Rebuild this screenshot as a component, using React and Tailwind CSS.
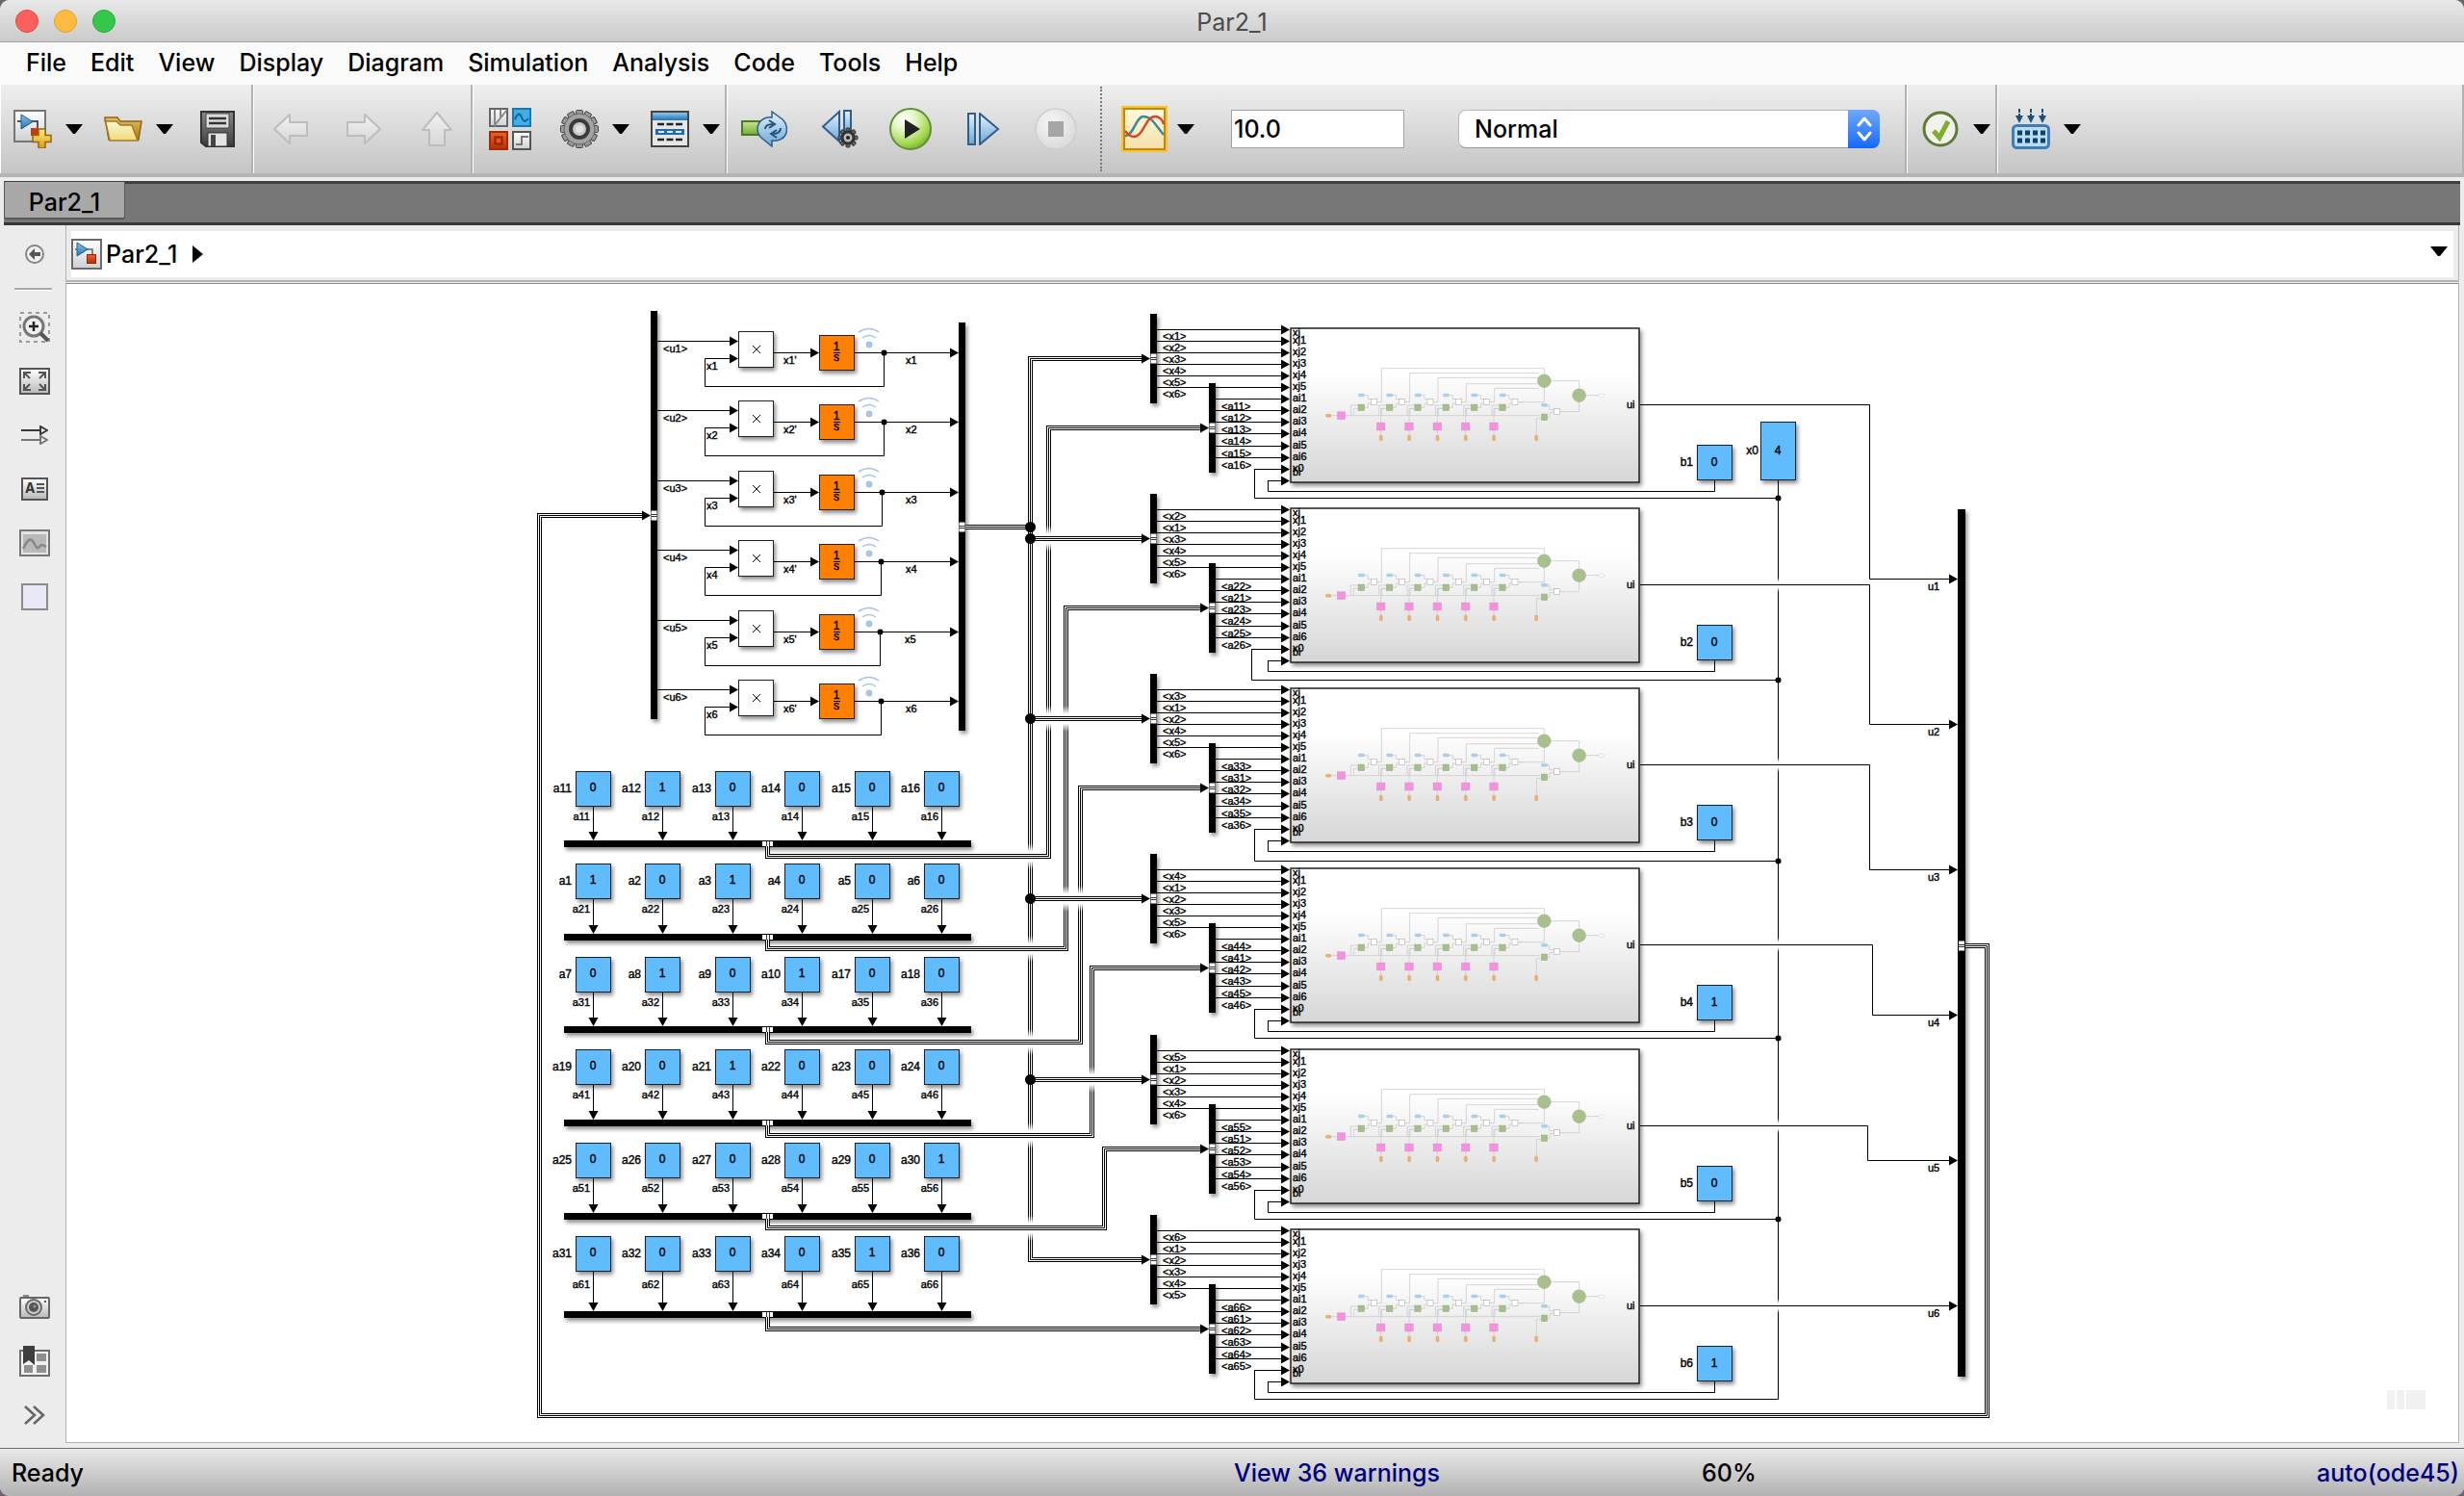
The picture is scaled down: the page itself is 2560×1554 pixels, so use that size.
import React from "react";

/* ---------- shared gradients ---------- */

function Grad({ id, from, to, horizontal = false }) {
  return (
    <linearGradient id={id} x1="0" y1="0" x2={horizontal ? "1" : "0"} y2={horizontal ? "0" : "1"}>
      <stop offset="0" stopColor={from} />
      <stop offset="1" stopColor={to} />
    </linearGradient>
  );
}

function SharedDefs() {
  return (
    <svg className="absolute size-0" aria-hidden="true">
      <defs>
        <Grad id="paper" from="#ffffff" to="#cdd0d4" />
        <Grad id="blue" from="#8fc4ea" to="#2272b4" />
        <Grad id="paleblue" from="#e4f2fc" to="#6ba6d6" />
        <Grad id="gold" from="#fff08a" to="#d99a0c" />
        <Grad id="folderBack" from="#e8c05a" to="#a9761f" />
        <Grad id="folderFront" from="#fffbe0" to="#f0d978" />
        <Grad id="steel" from="#8a8a8a" to="#3c3c3c" />
        <Grad id="ghost" from="#f2f2f2" to="#d6d6d6" />
        <Grad id="red" from="#f0602a" to="#b92d05" />
        <Grad id="green" from="#c8e69a" to="#6fae2e" />
        <Grad id="scopeBg" from="#fffbe2" to="#f3dfa4" />
        <Grad id="sidePaper" from="#ffffff" to="#b9b9b9" />
        <linearGradient id="subsystem" x1="0" y1="0" x2="0" y2="1">
          <stop offset="0" stopColor="#ffffff" />
          <stop offset="0.28" stopColor="#ffffff" />
          <stop offset="1" stopColor="#d6d6d6" />
        </linearGradient>
        <linearGradient id="cross" x1="0" y1="0" x2="0" y2="1">
          <stop offset="0" stopColor="#fff" stopOpacity="0" />
          <stop offset="0.32" stopColor="#fff" />
          <stop offset="0.68" stopColor="#fff" />
          <stop offset="1" stopColor="#fff" stopOpacity="0" />
        </linearGradient>
        <radialGradient id="playFill" cx="0.35" cy="0.25" r="0.85">
          <stop offset="0" stopColor="#ffffff" />
          <stop offset="0.35" stopColor="#e2f4bf" />
          <stop offset="0.75" stopColor="#9fd64a" />
          <stop offset="1" stopColor="#57a51c" />
        </radialGradient>
        <radialGradient id="stopFill" cx="0.4" cy="0.35" r="0.7">
          <stop offset="0" stopColor="#f6f6f6" />
          <stop offset="1" stopColor="#d9d9d9" />
        </radialGradient>
      </defs>
    </svg>
  );
}

/* ---------- toolbar icons ---------- */

const NewIcon = () => (
  <svg width="40" height="40" viewBox="0 0 40 40">
    <rect x="1" y="1" width="32" height="32" fill="url(#paper)" stroke="#767676" strokeWidth="2" />
    <path d="M4 12h4M18 12h7v8" fill="none" stroke="#555" strokeWidth="2" />
    <path d="M8 5l12 7.500-12 7.500z" fill="url(#blue)" stroke="#1b588c" />
    <rect x="18" y="19" width="8" height="8" fill="#c63a10" />
    <path d="M26 20h7v6.500h6v7h-6V40h-7v-6.500h-6v-7h6z" fill="url(#gold)" stroke="#94660a" strokeWidth="1.500" />
  </svg>
);

const FolderIcon = () => (
  <svg width="40" height="28" viewBox="0 0 40 28">
    <path d="M1 2h13l3 4h22l-3 19H5z" fill="url(#folderBack)" stroke="#8f661b" strokeWidth="1.500" />
    <path d="M1 3l5 23h29L29 10H17l-4-4H1z" fill="url(#folderFront)" stroke="#a07b2a" strokeWidth="1.500" />
  </svg>
);

const SaveIcon = () => (
  <svg width="36" height="38" viewBox="0 0 36 38">
    <path d="M1 1h34v36H6l-5-4z" fill="url(#steel)" stroke="#333" strokeWidth="2" />
    <rect x="6" y="3" width="24" height="15" fill="#dcdcdc" stroke="#444" />
    <path d="M9 8h18M9 13h18" stroke="#333" strokeWidth="2.500" />
    <rect x="8" y="23" width="20" height="14" fill="#e4e4e4" stroke="#333" />
    <rect x="11" y="25" width="5" height="12" fill="#444" />
  </svg>
);

const GhostArrow = ({ d, w, h }) => (
  <svg width={w} height={h} viewBox={`0 0 ${w} ${h}`}>
    <path d={d} fill="url(#ghost)" stroke="#bdbdbd" strokeWidth="2" strokeLinejoin="round" />
  </svg>
);

const LibraryIcon = () => (
  <svg width="44" height="44" viewBox="0 0 44 44">
    <rect x="1" y="1" width="18" height="18" fill="url(#paper)" stroke="#666" strokeWidth="2" />
    <path d="M6 2v16L18 3M12 2v9" fill="none" stroke="#888" strokeWidth="2" />
    <rect x="25" y="1" width="18" height="18" fill="#41aee4" stroke="#1b78ad" strokeWidth="2" />
    <path d="M27 12c3-7 5-7 7-2s4 5 7 1" fill="none" stroke="#12639a" strokeWidth="2" />
    <rect x="1" y="25" width="18" height="18" fill="url(#red)" stroke="#a42b08" strokeWidth="2" />
    <rect x="6.500" y="30.500" width="7" height="7" fill="#e6531e" stroke="#8c2304" strokeWidth="2" />
    <rect x="25" y="25" width="18" height="18" fill="url(#paper)" stroke="#555" strokeWidth="2" />
    <path d="M28 38h6v-8h7" fill="none" stroke="#777" strokeWidth="2" />
  </svg>
);

function Teeth({ cx, cy, r, w, h, n, fill, stroke }) {
  return Array.from({ length: n }, (_, i) => (
    <rect
      key={i}
      x={cx - w / 2}
      y={cy - r}
      width={w}
      height={h}
      rx="1"
      fill={fill}
      stroke={stroke}
      transform={`rotate(${(360 / n) * i} ${cx} ${cy})`}
    />
  ));
}

const GearIcon = () => (
  <svg width="40" height="40" viewBox="0 0 40 40">
    <Teeth cx={20} cy={20} r={19.500} w={7} h={8} n={12} fill="#9a9a9a" stroke="#444" />
    <circle cx="20" cy="20" r="16" fill="#a3a3a3" stroke="#666" />
    <circle cx="20" cy="20" r="9" fill="#c9c9c9" stroke="#3a3a3a" strokeWidth="4" />
    <circle cx="20" cy="20" r="4" fill="#e2e2e2" />
  </svg>
);

const ExplorerIcon = () => (
  <svg width="40" height="38" viewBox="0 0 40 38">
    <rect x="1" y="1" width="38" height="36" fill="#e6e6e6" stroke="#444" strokeWidth="2" />
    <rect x="2" y="2" width="36" height="8" fill="url(#blue)" />
    <path d="M7 14h26M7 30h26" stroke="#222" strokeWidth="2.500" strokeDasharray="7 2.500" />
    <rect x="5" y="19" width="30" height="6" fill="#1f6db0" />
    <path d="M8 22h24" stroke="#d9ecfa" strokeWidth="2" strokeDasharray="6 3" />
  </svg>
);

const UpdateIcon = () => (
  <svg width="48" height="38" viewBox="0 0 48 38">
    <rect x="1" y="11" width="20" height="14" fill="url(#green)" stroke="#4a7c22" strokeWidth="2" />
    <path d="M17 19c0-8 7-13 15-12V1l11 8c4 4 5 9 4 14-2 6-8 9-15 8v6l-10-8c-4-3-5-6-5-10z" fill="url(#paleblue)" stroke="#2f5d8c" strokeWidth="1.500" />
    <path d="M25 19c0-4 3-5 8-5M29 10l6 4-6 4M41 18c0 4-3 6-8 6M37 28l-6-4 6-4" fill="none" stroke="#27527e" strokeWidth="2" />
  </svg>
);

const StepBackIcon = () => (
  <svg width="40" height="40" viewBox="0 0 40 40">
    <path d="M19 2v31L2 17.500z" fill="url(#paleblue)" stroke="#2f5d8c" strokeWidth="2" />
    <rect x="24" y="1" width="7" height="24" fill="url(#paleblue)" stroke="#2f5d8c" strokeWidth="2" />
    <Teeth cx={28} cy={29} r={10} w={4} h={5} n={8} fill="#666" stroke="#333" />
    <circle cx="28" cy="29" r="6" fill="#bbb" stroke="#333" strokeWidth="3" />
    <circle cx="28" cy="29" r="2" fill="#222" />
  </svg>
);

const PlayIcon = () => (
  <svg width="46" height="46" viewBox="0 0 46 46">
    <circle cx="23" cy="23" r="21" fill="url(#playFill)" stroke="#5f8f3a" strokeWidth="2" />
    <path d="M17 13v20l16-10z" fill="#222" />
  </svg>
);

const StepIcon = () => (
  <svg width="34" height="34" viewBox="0 0 34 34">
    <rect x="1" y="1" width="7" height="32" fill="url(#paleblue)" stroke="#2f5d8c" strokeWidth="2" />
    <path d="M13 1v32l19-16z" fill="url(#paleblue)" stroke="#2f5d8c" strokeWidth="2" />
  </svg>
);

const StopIcon = () => (
  <svg width="44" height="44" viewBox="0 0 44 44">
    <circle cx="22" cy="22" r="21" fill="url(#stopFill)" stroke="#cfcfcf" strokeWidth="1.500" />
    <rect x="14" y="14" width="16" height="16" fill="#a6a6a6" />
  </svg>
);

const ScopeIcon = () => (
  <svg width="48" height="48" viewBox="0 0 48 48">
    <rect x="1" y="1" width="46" height="46" fill="url(#scopeBg)" stroke="#f6c526" strokeWidth="2" />
    <rect x="3" y="3" width="42" height="42" fill="none" stroke="#c58414" strokeWidth="2" />
    <path d="M4 31c9 0 11-20 19-20 9 0 13 10 21 19" fill="none" stroke="#3e8a96" strokeWidth="2.500" />
    <path d="M4 26c3 4 5 6 9 6 10 0 12-21 22-21 4 0 8 3 9 8" fill="none" stroke="#d6452b" strokeWidth="2.500" />
  </svg>
);

const CheckIcon = () => (
  <svg width="38" height="38" viewBox="0 0 38 38">
    <circle cx="19" cy="19" r="17" fill="#f1f1ee" stroke="#5e7a35" strokeWidth="3" />
    <path d="M12 21l6 7L27 11" fill="none" stroke="#7fae2c" strokeWidth="5" />
  </svg>
);

const BuildIcon = () => (
  <svg width="40" height="42" viewBox="0 0 40 42">
    <path d="M8 0v8M20 0v8M32 0v8" stroke="#1c4f7c" strokeWidth="2" strokeDasharray="4 1" />
    <path d="M4 7h8l-4 8zM16 7h8l-4 8zM28 7h8l-4 8z" fill="#1c4f7c" />
    <rect x="1.500" y="17.500" width="37" height="23" rx="4" fill="#b8dcf8" stroke="#3f7db4" strokeWidth="3" />
    <path d="M6 25h29M6 33h29" stroke="#123f68" strokeWidth="5" strokeDasharray="5 3" />
  </svg>
);

const DownTriangle = () => (
  <svg width="18" height="11" viewBox="0 0 18 11">
    <path d="M0 0h18l-8 10H8z" fill="#000" />
  </svg>
);

function Tool({ label, className, children }) {
  return (
    <button type="button" aria-label={label} className={"shrink-0 flex items-center justify-center " + className}>
      {children}
    </button>
  );
}

function Menu({ label, className }) {
  return (
    <button type="button" aria-label={label} className={"shrink-0 w-[18px] h-10 flex items-center justify-center " + className}>
      <DownTriangle />
    </button>
  );
}

function Group({ className = "", children }) {
  return (
    <div className={"flex items-center h-full border-l border-r-2 border-l-white border-r-[#b2b2b2] " + className}>
      {children}
    </div>
  );
}

function Toolbar() {
  return (
    <div className="h-[98px] shrink-0 flex items-center border-t-2 border-t-[#fbfbfb] border-b-4 border-b-[#b4b4b4] bg-linear-to-b from-[#efefef] to-[#c5c5c5]" role="toolbar" aria-label="Model">
      <Group>
        <Tool label="New model" className="ml-[13px] w-10"><NewIcon /></Tool>
        <Menu label="New options" className="ml-[14px]" />
        <Tool label="Open" className="ml-[22px] w-10"><FolderIcon /></Tool>
        <Menu label="Open options" className="ml-[14px]" />
        <Tool label="Save" className="ml-7 mr-[17px] w-9"><SaveIcon /></Tool>
      </Group>
      <Group>
        <Tool label="Back" className="ml-[20px] w-9"><GhostArrow w={36} h={32} d="M1 16L17 1v8h18v14H17v8z" /></Tool>
        <Tool label="Forward" className="ml-10 w-9"><GhostArrow w={36} h={32} d="M35 16L19 1v8H1v14h18v8z" /></Tool>
        <Tool label="Up to parent" className="ml-[42px] mr-[19px] w-8"><GhostArrow w={32} h={36} d="M16 1l15 18h-7v16H8V19H1z" /></Tool>
      </Group>
      <Group>
        <Tool label="Library browser" className="ml-4 w-11"><LibraryIcon /></Tool>
        <Tool label="Model configuration" className="ml-[30px] w-10"><GearIcon /></Tool>
        <Menu label="Configuration options" className="ml-[14px]" />
        <Tool label="Model explorer" className="ml-[22px] w-10"><ExplorerIcon /></Tool>
        <Menu label="Explorer options" className="ml-[14px] mr-[5px]" />
      </Group>
      <Group className="w-[1226px]">
        <Tool label="Update diagram" className="ml-[14px] w-12"><UpdateIcon /></Tool>
        <Tool label="Step back" className="ml-[35px] w-10"><StepBackIcon /></Tool>
        <Tool label="Run" className="ml-[30px] w-[46px]"><PlayIcon /></Tool>
        <Tool label="Step forward" className="ml-9 w-[34px]"><StepIcon /></Tool>
        <Tool label="Stop" className="ml-9 w-11"><StopIcon /></Tool>
        <div className="ml-6 h-[88px] border-l-2 border-dotted border-[#777]" />
        <Tool label="Data inspector" className="ml-[20px] w-12"><ScopeIcon /></Tool>
        <Menu label="Inspector options" className="ml-[10px]" />
        <input
          aria-label="Simulation stop time"
          defaultValue="10.0"
          className="ml-[38px] w-[180px] h-10 shrink-0 bg-white border border-[#a2a2a2] pl-[2px] text-[25px] font-medium leading-8 text-black outline-none"
        />
        <div className="relative ml-14 w-[438px] h-10 shrink-0">
          <select
            aria-label="Simulation mode"
            defaultValue="Normal"
            className="appearance-none w-full h-full rounded-lg bg-white border border-[#b8b8b8] border-b-[#999] pl-4 text-[25px] font-medium leading-8 text-black outline-none"
          >
            <option>Normal</option>
            <option>Accelerator</option>
            <option>Rapid Accelerator</option>
          </select>
          <div className="pointer-events-none absolute right-0 top-0 h-10 w-[33px] rounded-r-lg bg-linear-to-b from-[#6ea8fa] to-[#1268fb] flex items-center justify-center">
            <svg width="18" height="26" viewBox="0 0 18 26">
              <path d="M3 9l6-7 6 7M3 17l6 7 6-7" fill="none" stroke="#fff" strokeWidth="3" strokeLinecap="round" strokeLinejoin="round" />
            </svg>
          </div>
        </div>
      </Group>
      <Group>
        <Tool label="Model advisor" className="ml-[15px] w-[38px]"><CheckIcon /></Tool>
        <Menu label="Advisor options" className="ml-[15px] mr-[5px]" />
      </Group>
      <Group className="flex-1">
        <Tool label="Build model" className="ml-[14px] w-10"><BuildIcon /></Tool>
        <Menu label="Build options" className="ml-[14px]" />
      </Group>
    </div>
  );
}

/* ---------- palette icons ---------- */

const PALETTE_TOP = [
  ["Zoom in", (
    <svg key="i" width="32" height="32" viewBox="0 0 32 32">
      <rect x="1" y="1" width="30" height="30" fill="none" stroke="#9a9a9a" strokeWidth="2" strokeDasharray="4 4" />
      <circle cx="15" cy="15" r="10" fill="#f0f0f0" stroke="#777" strokeWidth="3" />
      <path d="M15 10v10M10 15h10" stroke="#222" strokeWidth="2.500" />
      <path d="M22 22l8 8" stroke="#555" strokeWidth="4" />
    </svg>
  )],
  ["Fit to view", (
    <svg key="i" width="32" height="28" viewBox="0 0 32 28">
      <rect x="1" y="1" width="30" height="26" fill="url(#sidePaper)" stroke="#555" strokeWidth="2" />
      <path d="M5 11V5h7M20 5h7v6M27 17v6h-7M12 23H5v-6M5 5l6 6M27 5l-6 6M27 23l-6-6M5 23l6-6" fill="none" stroke="#555" strokeWidth="2" />
    </svg>
  )],
  ["Sample time", (
    <svg key="i" width="28" height="20" viewBox="0 0 28 20">
      <path d="M0 5h20" stroke="#3a3a3a" strokeWidth="2" />
      <path d="M20 1v8l7-4z" fill="#eee" stroke="#3a3a3a" strokeWidth="2" />
      <path d="M0 15h20" stroke="#777" strokeWidth="2" />
      <path d="M20 11v8l7-4z" fill="#eee" stroke="#777" strokeWidth="2" />
    </svg>
  )],
  ["Annotation", (
    <svg key="i" width="28" height="24" viewBox="0 0 28 24">
      <rect x="1" y="1" width="26" height="22" fill="url(#sidePaper)" stroke="#555" strokeWidth="2" />
      <text x="4" y="16" className="text-[14px] font-bold font-['Inter']" fill="#333">A</text>
      <path d="M16 7h8M16 11h8M16 15h8" stroke="#555" strokeWidth="2" />
    </svg>
  )],
  ["Image", (
    <svg key="i" width="32" height="28" viewBox="0 0 32 28">
      <rect x="1" y="1" width="30" height="26" fill="#e4e4e4" stroke="#777" strokeWidth="2" />
      <rect x="4" y="5" width="24" height="19" fill="#b9b9b9" />
      <path d="M4 20c4-8 7-12 10-8s4 10 7 6c2-3 4-2 7 0" fill="none" stroke="#888" strokeWidth="2.500" />
    </svg>
  )],
  ["Area", (
    <svg key="i" width="28" height="28" viewBox="0 0 28 28">
      <rect x="1" y="1" width="26" height="26" fill="#e8e8f7" stroke="#8b8b8b" strokeWidth="2" />
    </svg>
  )],
];

const PALETTE_BOTTOM = [
  ["Screenshot", (
    <svg key="i" width="32" height="26" viewBox="0 0 32 26">
      <rect x="4" y="0" width="6" height="4" fill="#888" />
      <rect x="1" y="3" width="30" height="21" rx="1" fill="url(#sidePaper)" stroke="#666" strokeWidth="2" />
      <circle cx="15" cy="13" r="8" fill="#ccc" stroke="#666" strokeWidth="2" />
      <circle cx="15" cy="13" r="5" fill="#555" />
      <circle cx="16" cy="12" r="1.500" fill="#999" />
      <rect x="26" y="6" width="2" height="2" fill="#555" />
    </svg>
  )],
  ["Viewmarks", (
    <svg key="i" width="32" height="32" viewBox="0 0 32 32">
      <rect x="1" y="5" width="30" height="26" fill="#f0f0f0" stroke="#6d6d6d" strokeWidth="2" />
      <path d="M18 8h10v8H18zM18 20h10v8H18zM5 20h9v8H5z" fill="#8f8f8f" />
      <path d="M4 0h12v20l-6-5-6 4z" fill="#3d3d3d" />
    </svg>
  )],
  ["Show more", (
    <svg key="i" width="22" height="20" viewBox="0 0 22 20">
      <path d="M1 1l10 9-10 9M10 1l10 9-10 9" fill="none" stroke="#666" strokeWidth="2.500" />
    </svg>
  )],
];

function Palette() {
  return (
    <aside className="w-[68px] shrink-0 flex flex-col items-center pt-[2px] pb-px">
      <button type="button" aria-label="Hide browser" className="h-14 w-full pl-1 flex items-center justify-center">
        <svg width="20" height="20" viewBox="0 0 20 20">
          <circle cx="10" cy="10" r="9" fill="#f2f2f2" stroke="#858585" strokeWidth="2" />
          <path d="M10 4v4h6v4h-6v4l-6-6z" fill="#555" />
        </svg>
      </button>
      <div className="mt-[7px] mb-[10px] w-[39px] h-[3px] bg-[#a9a9a9] border-b border-white" />
      {PALETTE_TOP.map(([label, icon]) => (
        <button key={label} type="button" aria-label={label} className="h-14 w-full pl-1 flex items-center justify-center">{icon}</button>
      ))}
      <div className="flex-1" />
      {PALETTE_BOTTOM.map(([label, icon]) => (
        <button key={label} type="button" aria-label={label} className="h-14 w-full pl-1 flex items-center justify-center">{icon}</button>
      ))}
    </aside>
  );
}

/* ---------- block diagram ---------- */

const ROW_OFFSETS = [0, 187, 374, 561, 749, 936];
const LINE_OFFSETS = [342, 354, 366, 378, 390, 402, 414, 426, 438, 450, 463, 475, 487, 499];
const PORTS = ["xj", "xj1", "xj2", "xj3", "xj4", "xj5", "ai1", "ai2", "ai3", "ai4", "ai5", "ai6", "x0", "bi"];
const X_ORDER = ["123456", "213456", "312456", "412356", "512346", "612345"];
const A_ORDER = ["123456", "213456", "312456", "412356", "512346", "612345"];
const X0_Y = [517, 706, 894, 1078, 1266, 1453];
const B_VALUES = ["0", "0", "0", "1", "0", "1"];
const U_X = [1942, 1942, 1942, 1945, 1940, 1940];
const U_Y = [601, 752, 903, 1054, 1205, 1356];

const INTEGRATOR_Y = [354, 426, 499, 571, 644, 716];
const FEEDBACK_X = [918, 918, 916, 915, 914, 915];
const OUTPUT_LABEL_X = [941, 941, 941, 941, 940, 941];

const COLS = [616, 688, 761, 833, 906, 978];
const MATRIX = [
  { y: 801, bar: 873, bus: 889, turn: 1089, names: ["a11", "a12", "a13", "a14", "a15", "a16"], values: "010000" },
  { y: 897, bar: 970, bus: 985, turn: 1107, names: ["a1", "a2", "a3", "a4", "a5", "a6"], values: "101000" },
  { y: 994, bar: 1066, bus: 1082, turn: 1122, names: ["a7", "a8", "a9", "a10", "a17", "a18"], values: "010100" },
  { y: 1090, bar: 1163, bus: 1179, turn: 1134, names: ["a19", "a20", "a21", "a22", "a23", "a24"], values: "001000" },
  { y: 1187, bar: 1260, bus: 1275, turn: 1147, names: ["a25", "a26", "a27", "a28", "a29", "a30"], values: "000001" },
  { y: 1284, bar: 1362, bus: 1380, turn: 1147, names: ["a31", "a32", "a33", "a34", "a35", "a36"], values: "000010" },
];

const Wire = ({ d }) => <path d={d} fill="none" stroke="#000" strokeWidth="1" />;
const Bus = ({ d }) => (
  <g fill="none">
    <path d={d} stroke="#000" strokeWidth="5" />
    <path d={d} stroke="#fff" strokeWidth="3" />
    <path d={d} stroke="#000" strokeWidth="1" />
  </g>
);
const ArrowR = ({ x, y }) => <path d={`M${x} ${y}l-9 -5v10z`} fill="#000" />;
const ArrowD = ({ x, y }) => <path d={`M${x} ${y}l-5 -9h10z`} fill="#000" />;
const PortV = ({ x, y }) => (
  <g>
    <rect x={x} y={y - 5} width="6" height="10" fill="#fff" />
    <path d={`M${x} ${y - 1}h6M${x} ${y + 1}h6`} stroke="#333" />
  </g>
);
const Gap = ({ x, y }) => <rect x={x - 3} y={y - 13} width="7" height="27" fill="url(#cross)" />;
const Small = ({ x, y, end = false, children }) => (
  <text x={x} y={y} textAnchor={end ? "end" : "start"} stroke="#000" strokeWidth="0.4" className="text-[11px]">{children}</text>
);
const Name = ({ x, y, anchor = "end", children }) => (
  <text x={x} y={y} textAnchor={anchor} stroke="#000" strokeWidth="0.4" className="text-[12px]">{children}</text>
);
const Constant = ({ x, y, h = 37 }) => (
  <rect x={x + 0.5} y={y + 0.5} width="36" height={h - 1} fill="#61bcfd" stroke="#12222e" />
);

function Preview({ y }) {
  const cols = [343, 431, 519, 607, 695, 783];
  const tops = [188, 203, 217, 236, 250];
  const line = { fill: "none", stroke: "#cdcdcd", strokeWidth: 2.5 };
  return (
    <g transform={`translate(1300 ${y}) scale(0.33333)`}>
      <path d="M250 335H900" {...line} />
      {cols.map((x, i) => (
        <g key={x}>
          <path d={`M${x + 10} 272h11v12h8M${x + 10} 310h11v-13h8M${x + 48} 293h15`} {...line} />
          {i < 5 && <path d={`M${x + 63} 293V${tops[i]}H${i === 0 ? 913 : 896}${i === 0 ? "v16" : ""}`} {...line} />}
          <path d={`M${x - 10} 303h-23v32M${x - 10} 313h-14v22`} {...line} />
          {i < 5 && <path d={`M${x + 61} 396V313h14`} {...line} />}
          <rect x={x - 9} y="267" width="19" height="9" rx="4" fill="#a3d4f8" stroke="#9bb9cc" />
          <rect x={x - 10} y="300" width="20" height="20" fill="#a6bf8a" stroke="#909b85" />
          <rect x={x + 30} y="283" width="18" height="18" fill="#fff" stroke="#b5b5b5" strokeWidth="2" />
          {i < 5 && <rect x={x + 48} y="357" width="26" height="24" fill="#f88fe0" stroke="#b5a0b0" />}
          {i < 5 && <rect x={x + 57} y="397" width="9" height="16" rx="3" fill="#f5ae62" stroke="#bb9a78" />}
        </g>
      ))}
      <path d="M831 293h82v-46M934 227h88v22M1022 292v31h-60M922 303h7v14h14M922 340h8v-14h13M889 397v-53h15M1043 272h40" {...line} />
      <circle cx="913" cy="227" r="21" fill="#a8c18c" stroke="#95a783" />
      <circle cx="1022" cy="272" r="21" fill="#a8c18c" stroke="#95a783" />
      <rect x="1083" y="268" width="17" height="9" rx="4" fill="#fff" stroke="#b0b0b0" />
      <rect x="904" y="298" width="19" height="9" rx="4" fill="#a3d4f8" stroke="#9bb9cc" />
      <rect x="904" y="330" width="19" height="20" fill="#a6bf8a" stroke="#909b85" />
      <rect x="943" y="314" width="18" height="18" fill="#fff" stroke="#b5b5b5" strokeWidth="2" />
      <rect x="884" y="397" width="9" height="16" rx="3" fill="#f5ae62" stroke="#bb9a78" />
      <rect x="232" y="331" width="17" height="9" rx="4" fill="#f5ae62" stroke="#bb9a78" />
      <rect x="268" y="323" width="25" height="24" fill="#f88fe0" stroke="#b5a0b0" />
    </g>
  );
}

function Shapes() {
  return (
    <g className="drop-shadow-[2px_3px_2px_rgba(0,0,0,0.45)]">
      <rect x="676" y="323" width="7" height="424" />
      <rect x="996" y="335" width="7" height="424" />
      <rect x="2034" y="529" width="8" height="901" />
      {INTEGRATOR_Y.map((y) => (
        <g key={y}>
          <rect x="767.5" y={y - 9.5} width="36" height="37" fill="#fff" stroke="#222" />
          <rect x="851.5" y={y - 5.5} width="36" height="36" fill="#ff8000" stroke="#222" />
        </g>
      ))}
      {MATRIX.map((row) => (
        <g key={row.y}>
          {COLS.map((x) => <Constant key={x} x={x - 18} y={row.y} />)}
          <rect x="586" y={row.bar} width="423" height="7" />
        </g>
      ))}
      {ROW_OFFSETS.map((o) => (
        <g key={o}>
          <rect x="1195" y={326 + o} width="7" height="93" />
          <rect x="1256" y={398 + o} width="7" height="93" />
          <rect x="1341" y={341 + o} width="362" height="160" fill="url(#subsystem)" stroke="#222" strokeWidth="1.500" />
          <Constant x={1763} y={462 + o} />
        </g>
      ))}
      <Constant x={1829} y={438} h={61} />
    </g>
  );
}

function IntegratorRow({ i }) {
  const y = INTEGRATOR_Y[i];
  const fx = FEEDBACK_X[i] + 0.5;
  const n = i + 1;
  return (
    <g>
      <Wire d={`M683 ${y + 0.5}H760M804 ${y + 12.5}H845M888 ${y + 12.5}H990M${fx} ${y + 12.5}V${y + 47.5}H732.500V${y + 18.5}H760`} />
      <ArrowR x={767} y={y + 0.5} />
      <ArrowR x={767} y={y + 18.5} />
      <ArrowR x={851} y={y + 12.5} />
      <ArrowR x={996} y={y + 12.5} />
      <circle cx={fx} cy={y + 12.5} r="3" />
      <path d={`M782 ${y + 5}l8 8M790 ${y + 5}l-8 8`} stroke="#111" />
      <Name x={869} y={y + 10} anchor="middle">1</Name>
      <path d={`M866 ${y + 12.5}h7`} stroke="#000" />
      <Name x={869} y={y + 21} anchor="middle">s</Name>
      <g fill="none" stroke="#a8c4e0" strokeWidth="1.500">
        <path d={`M896 ${y - 3}q7 -5 14 0M892 ${y - 9}q11 -7 21 0`} />
        <circle cx="903" cy={y + 4} r="3" fill="#a8c8e6" stroke="#a0bddb" strokeWidth="1" />
      </g>
      <Small x={689} y={y + 12}>{`<u${n}>`}</Small>
      <Small x={734} y={y + 30}>{`x${n}`}</Small>
      <Small x={814} y={y + 24}>{`x${n}'`}</Small>
      <Small x={OUTPUT_LABEL_X[i]} y={y + 24}>{`x${n}`}</Small>
    </g>
  );
}

function MatrixRow({ row, r }) {
  const labelY = row.y + (r === 5 ? 54 : 51);
  return (
    <g>
      {COLS.map((x, c) => (
        <g key={x}>
          <Wire d={`M${x + 0.5} ${row.y + 37}V${row.bar - 6}`} />
          <ArrowD x={x + 0.5} y={row.bar} />
          <Name x={x} y={row.y + 21} anchor="middle">{row.values[c]}</Name>
          <Name x={x - 22} y={row.y + 22}>{row.names[c]}</Name>
          <Small x={x - 3} y={labelY} end>{`a${r + 1}${c + 1}`}</Small>
        </g>
      ))}
      <rect x="792" y={row.bar + 1} width="11" height="5" fill="#fff" />
      <path d={`M796.500 ${row.bar + 1}v5M799.500 ${row.bar + 1}v5`} stroke="#333" />
    </g>
  );
}

function SubsystemRow({ i }) {
  const o = ROW_OFFSETS[i];
  const n = i + 1;
  const x0x = i === 1 ? 1300.5 : 1303.5;
  const uy = 420.5 + o;
  return (
    <g>
      <Preview y={320 + o} />
      {LINE_OFFSETS.map((ly, k) => {
        const y = ly + o + 0.5;
        const from = k < 6 ? 1202 : k < 12 ? 1263 : k === 12 ? x0x : 1317.5;
        return (
          <g key={k}>
            <Wire d={`M${from} ${y}H1333`} />
            <ArrowR x={1340} y={y} />
            {k < 6 && <Small x={1208} y={ly + o + 11}>{`<x${X_ORDER[i][k]}>`}</Small>}
            {k >= 6 && k < 12 && <Small x={1269} y={ly + o + 12}>{`<a${n}${A_ORDER[i][k - 6]}>`}</Small>}
            <Small x={1343} y={k === 0 ? ly + o + 7 : k === 13 ? ly + o - 5 : ly + o + 3}>{PORTS[k]}</Small>
          </g>
        );
      })}
      <Wire d={`M${x0x} ${487 + o}V${X0_Y[i] + 0.5}H1847.500`} />
      <Wire d={`M1317.500 ${499 + o}V${510.5 + o}H1781.500V${499 + o}`} />
      {i < 5 && <circle cx="1847.5" cy={X0_Y[i] + 0.5} r="3" />}
      <Small x={1690} y={424 + o}>ui</Small>
      <Name x={1781} y={484 + o} anchor="middle">{B_VALUES[i]}</Name>
      <Name x={1759} y={484 + o}>{`b${n}`}</Name>
      <Wire d={i === 5 ? `M1704 ${uy}H2028` : `M1704 ${uy}H${U_X[i] + 0.5}V${U_Y[i] + 0.5}H2028`} />
      <ArrowR x={2034} y={U_Y[i] + 0.5} />
      <Small x={2003} y={U_Y[i] + 12}>{`u${n}`}</Small>
      <ArrowR x={1195} y={372.5 + o} />
      <ArrowR x={1256} y={444.5 + o} />
      <PortV x={1195.5} y={372.5 + o} />
      <PortV x={1256.5} y={444.5 + o} />
    </g>
  );
}

function Buses() {
  const branchY = ROW_OFFSETS.map((o) => 372.5 + o);
  return (
    <g>
      <Bus d="M2042 982.500H2064.500V1470.500H560.500V535.500H669" />
      <Bus d="M1188 372.500H1070.500V1308.500H1188" />
      {MATRIX.map((row, r) => {
        const portY = 444.5 + ROW_OFFSETS[r];
        return (
          <Bus
            key={row.y}
            d={r === 5 ? `M797.500 ${row.bar + 6}V${portY}H1249` : `M${row.turn + 0.5} ${row.bus + 0.5}V${portY}H1249`}
          />
        );
      })}
      {[889, 985, 1082, 1179, 1275].map((y) => <Gap key={y} x={1070} y={y} />)}
      <Gap x={1089} y={559} />
      <Gap x={1089} y={746} />
      <Gap x={1107} y={746} />
      <Gap x={1107} y={933} />
      <Gap x={1122} y={933} />
      <Gap x={1134} y={1121} />
      {MATRIX.slice(0, 5).map((row, r) => (
        <Bus key={row.y} d={`M797.500 ${row.bar + 6}V${row.bus + 0.5}H${row.turn + 0.5}V${row.bus - 6}`} />
      ))}
      {branchY.slice(1, 5).map((y) => <Bus key={y} d={`M1072 ${y}H1188`} />)}
      <Bus d="M1003 547.500H1066" />
      {[547.5, ...branchY.slice(1, 5)].map((y) => <circle key={y} cx="1070.5" cy={y} r="5.5" />)}
      <ArrowR x={676} y={535.5} />
    </g>
  );
}

function Diagram() {
  return (
    <svg viewBox="69 295 2485 1203" className="block w-full h-full font-['Liberation_Sans',Arial,sans-serif]" role="img" aria-label="Par2_1 block diagram">
      <Shapes />
      <Buses />
      <path d="M1847.500 499V1453.500" stroke="#000" />
      {ROW_OFFSETS.slice(1).map((o) => (
        <rect key={o} x="1844" y={413 + o} width="7" height="15" fill="url(#cross)" />
      ))}
      <g fill="#000" stroke="none">
        {INTEGRATOR_Y.map((y, i) => <IntegratorRow key={y} i={i} />)}
        {MATRIX.map((row, r) => <MatrixRow key={row.y} row={row} r={r} />)}
        {ROW_OFFSETS.map((o, i) => <SubsystemRow key={o} i={i} />)}
        <Name x={1847} y={472} anchor="middle">4</Name>
        <Name x={1827} y={472}>x0</Name>
        <PortV x={676.5} y={535.5} />
        <PortV x={996.5} y={547.5} />
        <PortV x={2035} y={982.5} />
      </g>
      <path d="M2480 1444h8v20h-8zM2490 1444h8v20h-8zM2500 1444h20v20h-20z" fill="#f1f1f1" />
    </svg>
  );
}

/* ---------- window ---------- */

const MENUS = ["File", "Edit", "View", "Display", "Diagram", "Simulation", "Analysis", "Code", "Tools", "Help"];

export default function App() {
  return (
    <div className="h-screen bg-[#6b6670] font-['Inter','Liberation_Sans',sans-serif] text-[25px] font-medium leading-8 text-black">
      <SharedDefs />
      <div className="h-full flex flex-col overflow-hidden rounded-[10px] bg-[#ececec]">
        <header className="relative h-11 shrink-0 flex items-center justify-center border-b border-[#a3a3a3] bg-linear-to-b from-[#e8e8e8] to-[#cbcbcb]">
          <div className="absolute left-4 flex gap-4">
            <button type="button" aria-label="Close" className="size-6 rounded-full bg-[#fc605c] border border-[#e2463f]" />
            <button type="button" aria-label="Minimize" className="size-6 rounded-full bg-[#fdbc40] border border-[#e1a032]" />
            <button type="button" aria-label="Zoom" className="size-6 rounded-full bg-[#34c84a] border border-[#27aa35]" />
          </div>
          <h1 className="pt-[2px] font-normal text-[#4b4b4b]">Par2_1</h1>
        </header>

        <nav className="h-[42px] shrink-0 flex items-center gap-[25px] pl-[27px] bg-[#fafafa]">
          {MENUS.map((m) => (
            <button key={m} type="button">{m}</button>
          ))}
        </nav>

        <Toolbar />

        <div className="mt-1 ml-1 mr-1 h-[46px] shrink-0 flex items-start border-t-[3px] border-t-[#3f3f3f] border-b-[3px] border-b-[#383838] bg-[#777777]">
          <button type="button" className="-mt-[2px] pt-1 h-[39px] w-[126px] rounded-b-[3px] border-b-2 border-r border-l border-[#5a5a5a] bg-[#a8a8a8]">Par2_1</button>
        </div>

        <div className="flex-1 min-h-0 flex pb-[5px] pr-[5px]">
          <Palette />
          <main className="flex-1 min-w-0 flex flex-col">
            <div className="h-[59px] shrink-0 border-l border-r border-b-2 border-[#b3b3b3] px-[5px] pt-[6px] pb-[3px]">
              <div className="h-full flex items-center bg-white">
                <svg width="32" height="32" viewBox="0 0 32 32">
                  <rect x="1" y="1" width="30" height="30" fill="url(#paper)" stroke="#6b6b6b" strokeWidth="2" />
                  <path d="M4 11h3M16 11h6v6" fill="none" stroke="#666" strokeWidth="1.500" />
                  <path d="M6 4l11 7-11 7z" fill="url(#blue)" stroke="#1c6399" />
                  <rect x="16.500" y="16.500" width="9" height="9" fill="url(#red)" stroke="#8f2606" />
                </svg>
                <a href="#model" className="ml-1">Par2_1</a>
                <button type="button" aria-label="Show children" className="ml-4">
                  <svg width="11" height="18" viewBox="0 0 11 18"><path d="M0 0l11 9L0 18z" /></svg>
                </button>
                <button type="button" aria-label="Location history" className="ml-auto mr-[6px] mb-[6px]">
                  <DownTriangle />
                </button>
              </div>
            </div>
            <div className="mt-px flex-1 min-h-0 border border-t-[#8e8e8e] border-[#b3b3b3] bg-white">
              <Diagram />
            </div>
          </main>
        </div>

        <footer className="h-[50px] shrink-0 grid grid-cols-2 items-center border-t border-[#6c6c6c] bg-linear-to-b from-[#e9e9e9] to-[#b2b2b2]">
          <span className="pl-3">Ready</span>
          <div className="flex items-center pl-[2px] pr-[5px]">
            <div className="w-[486px]">
              <a href="#warnings" className="text-[#00007f]">View 36 warnings</a>
            </div>
            <span>60%</span>
            <a href="#solver" className="ml-auto text-[#00007f]">auto(ode45)</a>
          </div>
        </footer>
      </div>
    </div>
  );
}
